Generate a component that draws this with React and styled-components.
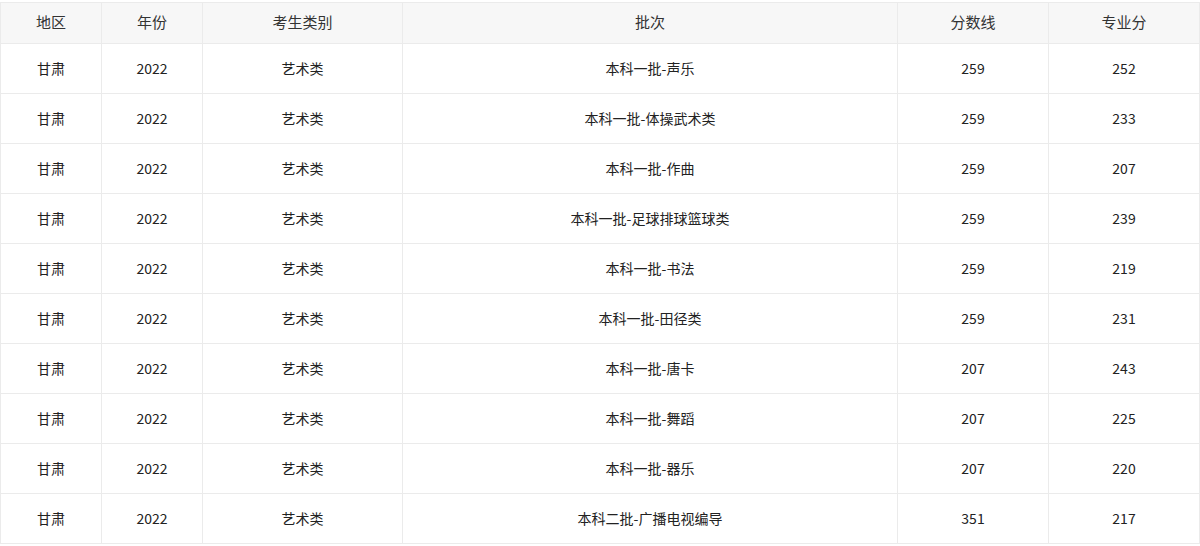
import React from "react";
import styled, { createGlobalStyle } from "styled-components";

const Global = createGlobalStyle`
  html, body { margin: 0; padding: 0; background: #fff; }
  body { font-family: "Microsoft YaHei", "Noto Sans CJK SC", "Noto Sans", sans-serif; color: #333; }
`;

const Wrap = styled.div`
  padding-top: 2px;
  width: 1200px;
`;

const Table = styled.table`
  width: 1199px;
  border-collapse: collapse;
  table-layout: fixed;
`;

const Th = styled.th`
  height: 37px;
  padding: 0 0 3px;
  background: #f7f7f7;
  border: 1px solid #ebebeb;
  font-size: 15px;
  font-weight: normal;
  color: #333;
  text-align: center;
`;

const Td = styled.td`
  height: 47px;
  padding: 0 0 2px;
  border: 1px solid #ebebeb;
  font-size: 14px;
  color: #222;
  text-align: center;
`;

const cols = [101, 101, 200, 495, 151, 151];
const heads = ["地区", "年份", "考生类别", "批次", "分数线", "专业分"];
const rows = [
  ["本科一批-声乐", 259, 252],
  ["本科一批-体操武术类", 259, 233],
  ["本科一批-作曲", 259, 207],
  ["本科一批-足球排球篮球类", 259, 239],
  ["本科一批-书法", 259, 219],
  ["本科一批-田径类", 259, 231],
  ["本科一批-唐卡", 207, 243],
  ["本科一批-舞蹈", 207, 225],
  ["本科一批-器乐", 207, 220],
  ["本科二批-广播电视编导", 351, 217],
];

export default function App() {
  return (
    <Wrap>
      <Global />
      <Table>
        <colgroup>
          {cols.map((w, i) => (
            <col key={i} style={{ width: w }} />
          ))}
        </colgroup>
        <thead>
          <tr>
            {heads.map((h) => (
              <Th key={h}>{h}</Th>
            ))}
          </tr>
        </thead>
        <tbody>
          {rows.map((r, i) => (
            <tr key={i}>
              <Td>甘肃</Td>
              <Td>2022</Td>
              <Td>艺术类</Td>
              <Td>{r[0]}</Td>
              <Td>{r[1]}</Td>
              <Td>{r[2]}</Td>
            </tr>
          ))}
        </tbody>
      </Table>
    </Wrap>
  );
}
